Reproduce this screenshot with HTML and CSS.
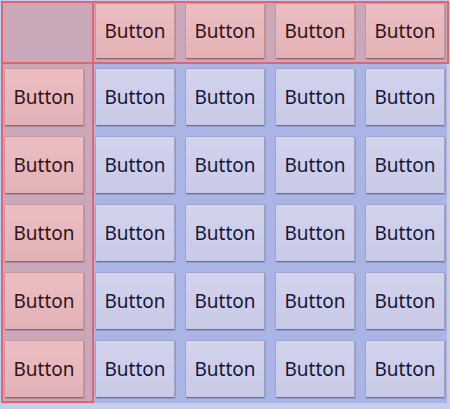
FILE: index.html
```html
<!DOCTYPE html>
<html>

<head>
    <title>Table Layout</title>
    <link rel="stylesheet" href="styles.css">
</head>

<body>
    <div class="table">
        <div class="row">
            <div class="corner"></div>
            <div class="header">
                <button class="btn pink">Button</button>
                <button class="btn pink">Button</button>
                <button class="btn pink">Button</button>
                <button class="btn pink">Button</button>
            </div>
        </div>
        <div class="row">
            <div class="side">
                <button class="btn pink">Button</button>
                <button class="btn pink">Button</button>
                <button class="btn pink">Button</button>
                <button class="btn pink">Button</button>
                <button class="btn pink">Button</button>
            </div>
            <div class="grid">
                <button class="btn">Button</button>
                <button class="btn">Button</button>
                <button class="btn">Button</button>
                <button class="btn">Button</button>
                <button class="btn">Button</button>
                <button class="btn">Button</button>
                <button class="btn">Button</button>
                <button class="btn">Button</button>
                <button class="btn">Button</button>
                <button class="btn">Button</button>
                <button class="btn">Button</button>
                <button class="btn">Button</button>
                <button class="btn">Button</button>
                <button class="btn">Button</button>
                <button class="btn">Button</button>
                <button class="btn">Button</button>
                <button class="btn">Button</button>
                <button class="btn">Button</button>
                <button class="btn">Button</button>
                <button class="btn">Button</button>
            </div>
        </div>
    </div>
</body>

</html>
```

FILE: styles.css
```css
body {
    margin: 0;
    padding: 1px;
    background-color: #c7ceeb;
    font-family: "Noto Sans", "Open Sans", sans-serif;
}

.table {
    display: flex;
    flex-direction: column;
    align-items: flex-start;
}

.row {
    display: flex;
}

.corner {
    width: 89px;
    height: 59px;
    border: 2px solid #e9616b;
    background-color: #c9a8b9;
}

.header {
    display: flex;
    gap: 10px;
    height: 59px;
    padding: 0 2px 0 1px;
    border: 2px solid #e9616b;
    border-left: none;
    background-color: #c9a8b9;
}

.header .btn {
    height: 56px;
}

.side {
    display: flex;
    flex-direction: column;
    gap: 10px;
    width: 80px;
    padding: 4px 8px 3px 1px;
    border: 2px solid #e9616b;
    border-top: none;
    background-color: #c9a8b9;
}

.grid {
    display: grid;
    grid-template-columns: repeat(4, 80px);
    grid-auto-rows: 58px;
    gap: 10px;
    padding: 4px 2px 3px 1px;
    background-color: #aab5e6;
}

.btn {
    width: 80px;
    height: 58px;
    margin: 0;
    padding: 0;
    border: 1px solid #a0a4c8;
    border-bottom-color: #6e7299;
    border-radius: 2px;
    background: linear-gradient(#d2d4ee, #c8cae6);
    box-shadow: 1px 1px 0 rgba(70, 72, 120, 0.25);
    color: #15163a;
    font-family: inherit;
    font-size: 19px;
}

.btn.pink {
    border-color: #c4979e;
    border-bottom-color: #8e656c;
    background: linear-gradient(#ecbec1, #e2b2b7);
    box-shadow: 1px 1px 0 rgba(120, 70, 80, 0.25);
    color: #331217;
}
```
